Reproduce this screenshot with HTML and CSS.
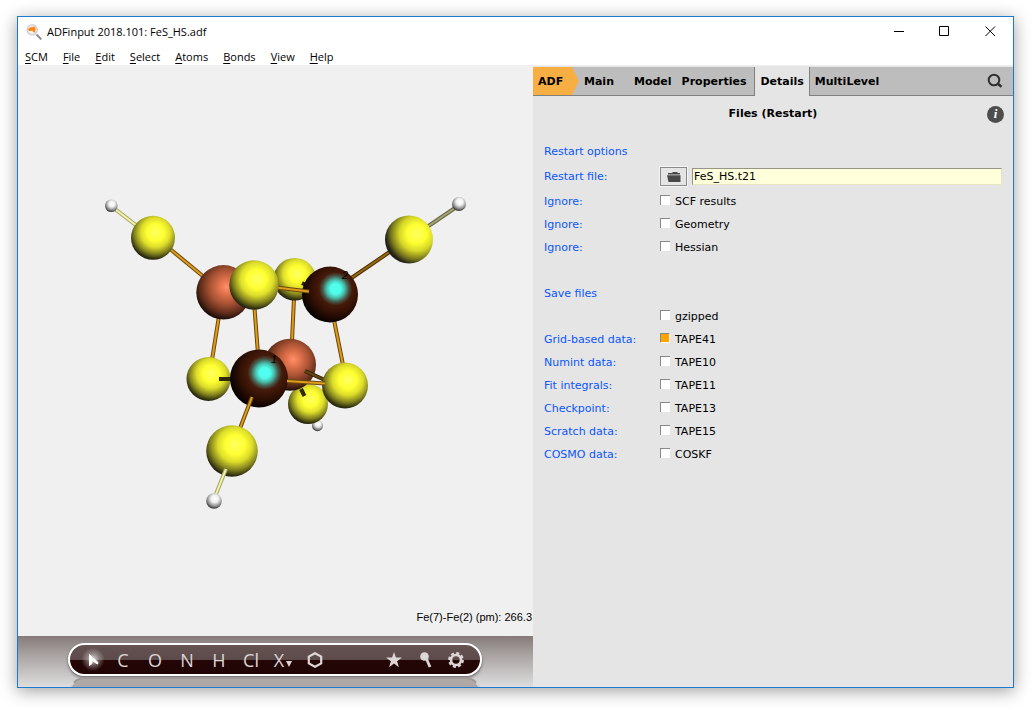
FILE: index.html
```html
<!DOCTYPE html>
<html lang="en">
<head>
<meta charset="utf-8">
<title>ADFinput 2018.101: FeS_HS.adf</title>
<link rel="stylesheet" href="styles.css">
</head>
<body>
<div class="window">
  <header class="titlebar">
    <svg class="app-icon" viewBox="0 0 16 16" aria-hidden="true">
      <path d="M10.5 10.5 15.3 15.3" stroke="#858585" stroke-width="1.8"/>
      <circle cx="6.2" cy="5.8" r="5" fill="#f4f4f4" stroke="#d2d2d2" stroke-width="1.6"/>
      <path d="M2 5.2 4 3.4 8.5 2.4 9.6 4.6 9 8.6 7.4 8.2 6.4 6.8 3 7Z" fill="#ff8412"/>
    </svg>
    <h1 class="title">ADFinput 2018.101: FeS_HS.adf</h1>
    <div class="controls">
      <button type="button" class="control" aria-label="Minimize"><svg viewBox="0 0 11 11"><path d="M1 5.5h10"/></svg></button>
      <button type="button" class="control" aria-label="Maximize"><svg viewBox="0 0 11 11"><path d="M.5 .5h9v9h-9z"/></svg></button>
      <button type="button" class="control" aria-label="Close"><svg viewBox="0 0 11 11"><path d="M.5 .5l9.500 9.500M10 .5l-9.500 9.500"/></svg></button>
    </div>
  </header>
  <nav class="menubar">
    <button type="button"><u>S</u>CM</button>
    <button type="button"><u>F</u>ile</button>
    <button type="button"><u>E</u>dit</button>
    <button type="button"><u>S</u>elect</button>
    <button type="button"><u>A</u>toms</button>
    <button type="button"><u>B</u>onds</button>
    <button type="button"><u>V</u>iew</button>
    <button type="button"><u>H</u>elp</button>
  </nav>
  <main class="content">
    <section class="viewer">
      <div class="scene">
        <svg class="molecule" viewBox="18 66 515 570" role="img" aria-label="Iron sulfur cluster">
          <defs>
            <radialGradient id="sulfur" cx=".56" cy=".38" r=".64">
              <stop offset="0" stop-color="#ffff62"/><stop offset=".3" stop-color="#ffff32"/><stop offset=".52" stop-color="#dddd2b"/><stop offset=".75" stop-color="#85851f"/><stop offset=".93" stop-color="#30300f"/><stop offset="1" stop-color="#1c1c14"/>
            </radialGradient>
            <radialGradient id="sulfur-side" cx=".66" cy=".38" r=".72">
              <stop offset="0" stop-color="#ffff62"/><stop offset=".28" stop-color="#ffff32"/><stop offset=".5" stop-color="#d6d628"/><stop offset=".74" stop-color="#77771c"/><stop offset=".9" stop-color="#242418"/><stop offset="1" stop-color="#1c1c1c"/>
            </radialGradient>
            <radialGradient id="iron" cx=".56" cy=".4" r=".62">
              <stop offset="0" stop-color="#ff906b"/><stop offset=".2" stop-color="#e5754f"/><stop offset=".5" stop-color="#a95334"/><stop offset=".8" stop-color="#5a2a19"/><stop offset="1" stop-color="#120806"/>
            </radialGradient>
            <radialGradient id="selected" cx=".6" cy=".4" r=".66">
              <stop offset="0" stop-color="#50fff0"/><stop offset=".14" stop-color="#50fdec"/><stop offset=".24" stop-color="#48c2b0"/><stop offset=".35" stop-color="#475a4c"/><stop offset=".45" stop-color="#461a0a"/><stop offset=".65" stop-color="#321104"/><stop offset=".9" stop-color="#0c0300"/><stop offset="1" stop-color="#000"/>
            </radialGradient>
            <radialGradient id="hydrogen" cx=".55" cy=".35" r=".68">
              <stop offset="0" stop-color="#fff"/><stop offset=".35" stop-color="#f0f0f0"/><stop offset=".7" stop-color="#909090"/><stop offset="1" stop-color="#202020"/>
            </radialGradient>
          </defs>

          <g class="bond bond-pale"><path d="M115 209 137 226"/><path d="M115 209 137 226"/></g>
          <g class="bond bond-dim"><path d="M427 227 455 208"/><path d="M427 227 455 208"/></g>
          <g class="bond bond-brown"><path d="M350 279 391 251"/><path d="M350 279 391 251"/></g>
          <g class="bond"><path d="M170 249 204 277"/><path d="M170 249 204 277"/></g>
          <g class="bond"><path d="M219 316 212 360"/><path d="M219 316 212 360"/></g>
          <g class="bond"><path d="M294 298 292 341"/><path d="M294 298 292 341"/></g>
          <g class="bond"><path d="M334 320 343 365"/><path d="M334 320 343 365"/></g>

          <circle cx="111.3" cy="205.8" r="6.3" fill="url(#hydrogen)"/>
          <circle cx="459" cy="204" r="7" fill="url(#hydrogen)"/>
          <circle cx="317.5" cy="425.7" r="5.5" fill="url(#hydrogen)"/>
          <circle cx="153" cy="237.8" r="22" fill="url(#sulfur)"/>
          <circle cx="409" cy="239.5" r="24" fill="url(#sulfur-side)"/>
          <circle cx="294.7" cy="279.2" r="21.3" fill="url(#sulfur)"/>
          <path class="stub" d="M302 283 310 287"/>
          <circle cx="223.5" cy="292.3" r="27.2" fill="url(#iron)"/>
          <circle cx="308" cy="404" r="20" fill="url(#sulfur)"/>
          <circle cx="290" cy="364.7" r="26" fill="url(#iron)"/>
          <path class="stub" d="M301 389 304.500 396"/>
          <g class="bond bond-dark"><path d="M305 371 327 381"/><path d="M305 371 327 381"/></g>
          <circle cx="208.500" cy="379" r="22" fill="url(#sulfur)"/>
          <path class="stub" d="M219 379h16"/>
          <circle cx="330" cy="294.5" r="28" fill="url(#selected)"/>
          <g class="bond"><path d="M276 287.500 309 291.500"/><path d="M276 287.500 309 291.500"/></g>
          <g class="bond"><path d="M254.500 308 258 354"/><path d="M254.500 308 258 354"/></g>
          <circle cx="254" cy="285" r="24.700" fill="url(#sulfur)"/>
          <circle cx="259" cy="378.5" r="29" fill="url(#selected)"/>
          <circle cx="345" cy="385.5" r="23" fill="url(#sulfur)"/>
          <g class="bond"><path d="M287 381 325 383.500"/><path d="M287 381 325 383.500"/></g>
          <circle cx="232" cy="451" r="25.8" fill="url(#sulfur)"/>
          <g class="bond"><path d="M252 397 240.500 427"/><path d="M252 397 240.500 427"/></g>
          <g class="bond bond-pale"><path d="M226 469 216 494"/><path d="M226 469 216 494"/></g>
          <circle cx="214" cy="501" r="7.8" fill="url(#hydrogen)"/>
          <text class="atom-tag" x="342" y="279">2</text>
          <text class="atom-tag" x="271" y="363">1</text>
        </svg>
        <p class="measure">Fe(7)-Fe(2) (pm): 266.3</p>
      </div>
      <div class="dock">
        <div class="pill">
          <button type="button" class="tool tool-select" aria-label="Select"><svg viewBox="0 0 16 16"><path d="M4.500 2.500v11l2.500-2v-3l5.500 3.500 .5-1.500Z" stroke="#fff" stroke-width="1"/></svg></button>
          <button type="button" class="tool">C</button>
          <button type="button" class="tool">O</button>
          <button type="button" class="tool">N</button>
          <button type="button" class="tool">H</button>
          <button type="button" class="tool">Cl</button>
          <button type="button" class="tool tool-other">X<svg class="caret" viewBox="0 0 6 6" aria-hidden="true"><path d="M0 0h6L3 6z"/></svg></button>
          <button type="button" class="tool" aria-label="Structures"><svg viewBox="0 0 16 16"><path d="M8 1.200 14.200 4.600v6.800L8 14.800 1.800 11.400V4.600z" fill="none" stroke="#dcd6d5" stroke-width="2.200"/></svg></button>
          <span class="spacer"></span>
          <button type="button" class="tool" aria-label="Favorites"><svg viewBox="0 0 16 16"><path d="M8 0 9.900 5.500 16 5.600 11.100 9.200 12.900 15.200 8 11.600 3.100 15.200 4.900 9.200 0 5.600 6.100 5.500Z"/></svg></button>
          <button type="button" class="tool" aria-label="Pre-optimize"><svg viewBox="0 0 16 16"><circle cx="6.500" cy="4.500" r="4.300"/><path d="M8.500 7 12 15" stroke="#dcd6d5" stroke-width="2.800"/></svg></button>
          <button type="button" class="tool tool-last" aria-label="Settings"><svg viewBox="0 0 16 16"><circle cx="8" cy="8" r="5" fill="none" stroke="#dcd6d5" stroke-width="2.600"/><circle cx="8" cy="8" r="6.800" fill="none" stroke="#dcd6d5" stroke-width="2.200" stroke-dasharray="3.100 2.240"/></svg></button>
        </div>
        <div class="reflection"></div>
      </div>
    </section>
    <section class="panel">
      <nav class="tabs">
        <button type="button" class="tab tab-adf">ADF</button>
        <button type="button" class="tab tab-main">Main</button>
        <button type="button" class="tab">Model</button>
        <button type="button" class="tab tab-properties">Properties</button>
        <button type="button" class="tab tab-active">Details</button>
        <button type="button" class="tab">MultiLevel</button>
        <button type="button" class="search" aria-label="Search"><svg viewBox="0 0 16 16"><circle cx="7" cy="7" r="5.300" fill="none" stroke="#303030" stroke-width="2"/><path d="M10.500 10.500 14.500 13.800" stroke="#303030" stroke-width="2.600"/></svg></button>
      </nav>
      <div class="heading">
        <h2>Files (Restart)</h2>
        <button type="button" class="info" aria-label="Information">i</button>
      </div>
      <form class="form">
        <h3 class="section">Restart options</h3>
        <div class="row row-file">
          <label for="restart">Restart file:</label>
          <button type="button" class="browse" aria-label="Browse"><svg viewBox="0 0 14 10"><path d="M1 2.500V1H5L6 0H10L11 1H13V2.500Z" fill="#484848"/><path d="M0 3.200H13.500V10H1.500Z" fill="#484848"/></svg></button>
          <input type="text" id="restart" class="file" value="FeS_HS.t21">
        </div>
        <div class="row"><span>Ignore:</span><label class="check"><input type="checkbox">SCF results</label></div>
        <div class="row"><span>Ignore:</span><label class="check"><input type="checkbox">Geometry</label></div>
        <div class="row"><span>Ignore:</span><label class="check"><input type="checkbox">Hessian</label></div>
        <h3 class="section section-next">Save files</h3>
        <div class="row"><span></span><label class="check"><input type="checkbox">gzipped</label></div>
        <div class="row"><span>Grid-based data:</span><label class="check"><input type="checkbox" checked>TAPE41</label></div>
        <div class="row"><span>Numint data:</span><label class="check"><input type="checkbox">TAPE10</label></div>
        <div class="row"><span>Fit integrals:</span><label class="check"><input type="checkbox">TAPE11</label></div>
        <div class="row"><span>Checkpoint:</span><label class="check"><input type="checkbox">TAPE13</label></div>
        <div class="row"><span>Scratch data:</span><label class="check"><input type="checkbox">TAPE15</label></div>
        <div class="row"><span>COSMO data:</span><label class="check"><input type="checkbox">COSKF</label></div>
      </form>
    </section>
  </main>
</div>
</body>
</html>
```
FILE: styles.css
```css
* { box-sizing: border-box; }
body {
  margin: 0;
  min-height: 100vh;
  padding: 16px 21px 22px 17px;
  display: flex;
  background: #fff;
  color: #000;
  font: 11px/16px "DejaVu Sans", Verdana, sans-serif;
}
button {
  margin: 0;
  padding: 0;
  border: 0;
  background: none;
  color: inherit;
  font: inherit;
}
h1, h2, h3, p { margin: 0; font: inherit; }
svg { display: block; }

.window {
  flex: 1;
  display: flex;
  flex-direction: column;
  border: 1px solid #1b7ad0;
  background: #fff;
  box-shadow: 0 3px 16px rgba(0, 0, 0, .38);
}
.titlebar {
  display: flex;
  align-items: center;
  height: 29px;
  padding-left: 8px;
  font: 11px/16px "Open Sans", sans-serif;
}
.app-icon { width: 16px; height: 16px; margin-right: 5px; }
.controls { display: flex; margin-left: auto; }
.control {
  width: 46px;
  height: 29px;
  display: grid;
  place-items: center;
}
.control svg { width: 11px; height: 11px; fill: none; stroke: #000; }
.menubar {
  display: flex;
  gap: 15px;
  height: 19px;
  padding-left: 7px;
  font: 11px/22px "Open Sans", sans-serif;
}
.menubar u { text-underline-offset: 2px; }

.content {
  flex: 1;
  display: grid;
  grid-template-columns: 515fr 480fr;
  border-top: 1px solid #f0f0f0;
}
.viewer { display: flex; flex-direction: column; background: #f0f0f0; }
.scene { flex: 1; display: grid; }
.molecule { grid-area: 1 / 1; width: 100%; height: 100%; }
.bond path { stroke: #6d4708; stroke-width: 4; }
.bond path + path { stroke: #dc9c1e; stroke-width: 2; }
.bond-pale path { stroke: #a5a566; }
.bond-pale path + path { stroke: #f3f3ad; }
.bond-dim path { stroke: #68684a; }
.bond-dim path + path { stroke: #a5a573; }
.bond-brown path { stroke: #4b3008; }
.bond-brown path + path { stroke: #97690f; }
.bond-dark path { stroke: #291d03; }
.bond-dark path + path { stroke: #68490c; }
.stub { stroke: #302704; stroke-width: 4; }
.atom-tag { font: italic 11px "Liberation Sans", Arial, sans-serif; }
.measure {
  grid-area: 1 / 1;
  align-self: end;
  justify-self: end;
  padding: 0 1px 11px 0;
  font: 11px/16px "Liberation Sans", Arial, sans-serif;
}

.dock {
  height: 51px;
  padding: 7px 51px 0 50px;
  overflow: hidden;
  background: linear-gradient(#847a79, #a7a1a0 35%, #dedede);
}
.pill {
  display: flex;
  align-items: center;
  height: 33px;
  padding: 0 10px 0 9px;
  border: 2px solid #fff;
  border-radius: 17px;
  background: linear-gradient(#655352 0, #5c4b4a 52%, #250606 52%, #200404);
  box-shadow: 0 2px 3px rgba(0, 0, 0, .45);
  color: #dcd6d5;
  font: 18px/28px "Open Sans", sans-serif;
}
.tool {
  width: 32px;
  height: 29px;
  display: flex;
  align-items: center;
  justify-content: center;
}
.tool svg { width: 16px; height: 16px; fill: #dcd6d5; }
.tool-select { width: 28px; background: radial-gradient(circle, #fffc, #fff5 28%, #fff0 58%); }
.tool-select svg { fill: #fff; }
.tool-other { gap: 2px; }
.tool .caret { width: 6px; height: 6px; margin-top: 8px; }
.tool-last { width: 28px; }
.spacer { flex: 1; }
.reflection {
  height: 40px;
  margin-top: 1px;
  border: 2px solid #d5d2d2;
  border-top-color: #a09998;
  border-radius: 17px;
  background: #aea8a7;
}

.panel { padding-top: 1px; background: #e5e5e5; }
.tabs {
  display: flex;
  height: 29px;
  border-bottom: 1px solid #808080;
  background: #bdbdbd;
  font-weight: bold;
}
.tab { padding: 1px 5px 0; height: 28px; }
.tab-adf {
  width: 46px;
  text-align: left;
  background: #f7ae43;
  clip-path: polygon(0 0, 39px 0, 100% 50%, 39px 100%, 0 100%);
}
.tab-main { padding-right: 15px; }
.tab-properties { padding-right: 8px; }
.tab-active {
  height: 29px;
  padding-bottom: 1px;
  border: solid #808080;
  border-width: 0 1px;
  background: #e5e5e5;
}
.search { margin-left: auto; padding-right: 10px; }
.search svg { width: 16px; height: 16px; }
.heading {
  display: grid;
  align-items: center;
  height: 36px;
  padding: 0 9px;
}
.heading h2 { grid-area: 1 / 1; justify-self: center; font-weight: bold; }
.info {
  grid-area: 1 / 1;
  justify-self: end;
  width: 17px;
  height: 17px;
  border-radius: 50%;
  background: #4d4d4d;
  color: #fff;
  font: italic bold 13px/16px "Liberation Serif", serif;
}
.form { padding: 8px 11px; }
.section, .row { height: 23px; line-height: 23px; color: #0a55ff; }
.section-next { margin-top: 23px; }
.row {
  display: grid;
  grid-template-columns: 116px 1fr;
  align-items: center;
}
.row-file {
  grid-template-columns: 116px 27px 1fr;
  height: 27px;
}
.browse {
  display: grid;
  place-items: center;
  height: 19px;
  border: 1px solid #8a8a8a;
  outline: 1px solid #f5f5f5;
}
.browse svg { width: 14px; height: 10px; }
.file {
  min-width: 0;
  height: 17px;
  margin-left: 5px;
  padding: 0 1px;
  border: 1px solid #e6e6c3;
  border-top-color: #969684;
  border-left-color: #969684;
  border-radius: 0;
  background: #ffffdc;
  color: #000;
  font: inherit;
}
.check { display: flex; align-items: center; gap: 5px; color: #000; }
.check input {
  appearance: none;
  width: 10px;
  height: 10px;
  margin: 0 0 3px;
  border: solid #888;
  border-width: 1px 0 0 1px;
  background: #fff;
}
.check input:checked {
  background: #ffa500;
  border-bottom: 1px solid #fff;
  border-right: 1px solid #fff;
}
```
